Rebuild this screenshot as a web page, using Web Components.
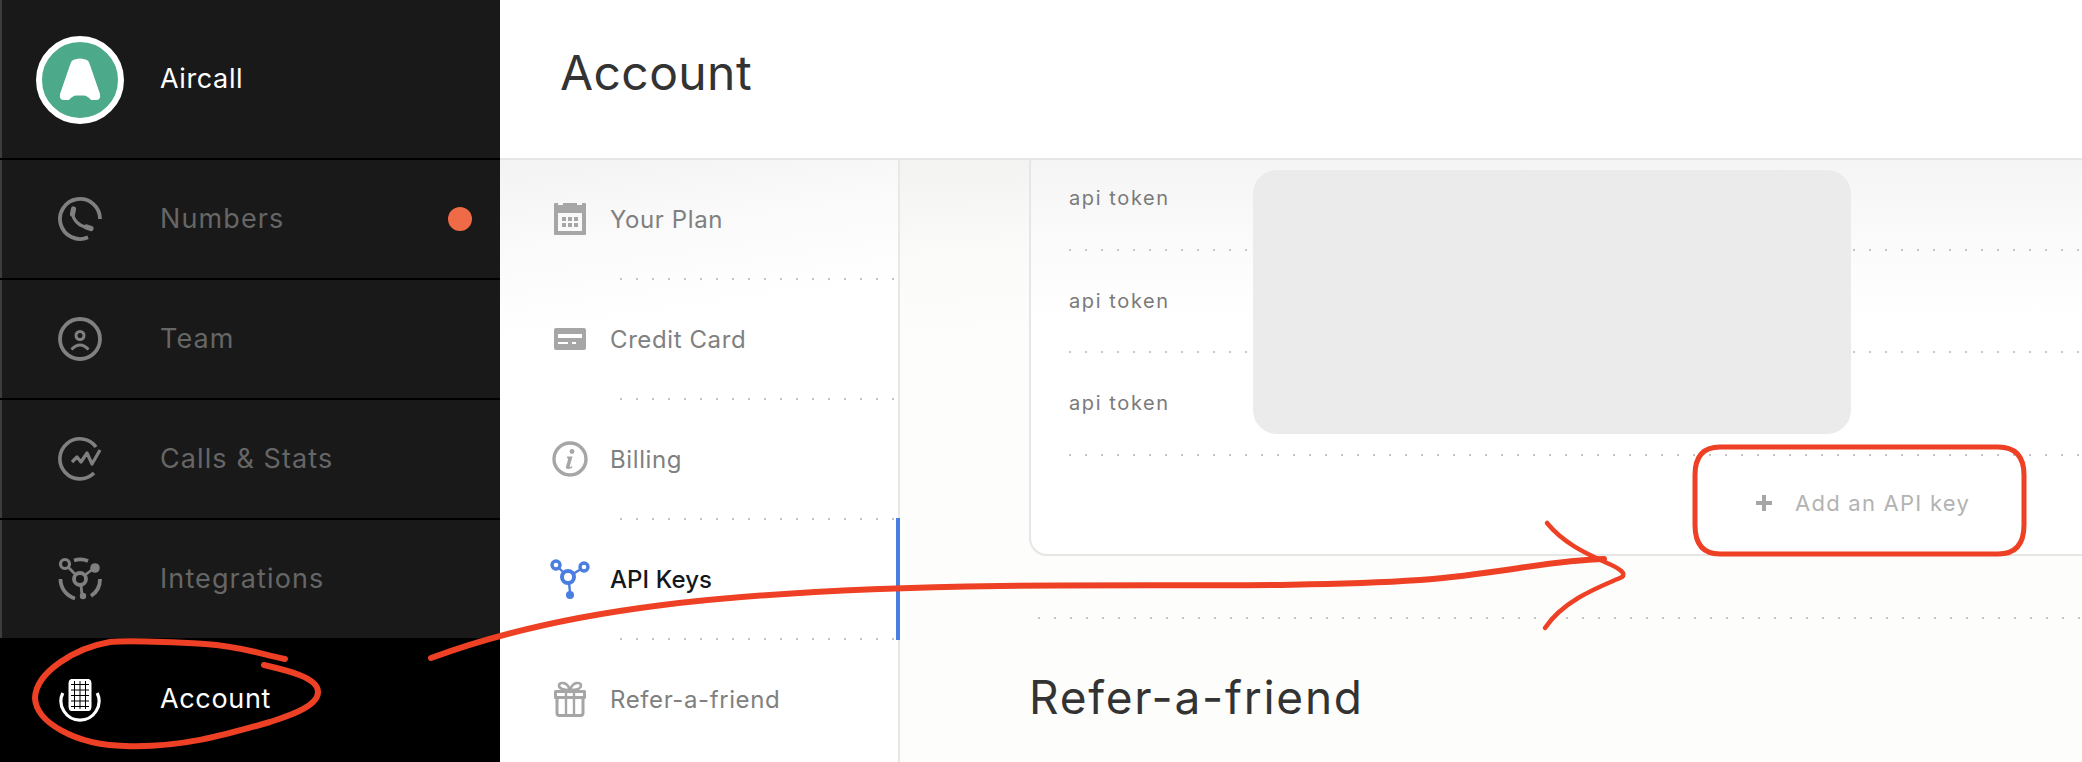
<!DOCTYPE html>
<html>
<head>
<meta charset="utf-8">
<title>Account</title>
<style>
    html, body{
        margin: 0;
        height: 100%;
        overflow: hidden;
        font-family: "Inter", "Liberation Sans", sans-serif;
    }
</style>
</head>
<body>
<app-page>
    <side-bar slot="side">
        <brand-row>Aircall</brand-row>
        <nav-row icon="phone" dot>Numbers</nav-row>
        <nav-row icon="team">Team</nav-row>
        <nav-row icon="stats">Calls &amp; Stats</nav-row>
        <nav-row icon="integrations" last>Integrations</nav-row>
        <nav-row icon="account" active last>Account</nav-row>
    </side-bar>
    <page-header slot="head">Account</page-header>
    <sub-nav slot="nav">
        <sub-item icon="plan">Your Plan</sub-item>
        <sub-item icon="card">Credit Card</sub-item>
        <sub-item icon="info">Billing</sub-item>
        <sub-item icon="keys" active>API Keys</sub-item>
        <sub-item icon="gift" last>Refer-a-friend</sub-item>
    </sub-nav>
    <key-card slot="main">
        <key-row>api token</key-row>
        <key-row>api token</key-row>
        <key-row>api token</key-row>
        <add-key>Add an API key</add-key>
    </key-card>
    <dot-line slot="main" style="margin: 61px 0 0 9px"></dot-line>
    <section-title slot="main">Refer-a-friend</section-title>
</app-page>

<script>
const ICONS = {
    phone: `<svg width="44" height="44" viewBox="0 0 44 44" fill="none" stroke="currentColor" stroke-linecap="round"><path d="M30 40.300A20 20 0 1 1 42 22" stroke-width="3.800" stroke-linecap="butt"/><path d="M15.500 12L14.500 17M28.500 30L33 31.500" stroke-width="5.200"/><path d="M14.500 16C15 23 21 29 29 30.500" stroke-width="3.200"/></svg>`,
    team: `<svg width="44" height="44" viewBox="0 0 44 44" fill="none" stroke="currentColor"><circle cx="22" cy="22" r="20" stroke-width="3.800"/><circle cx="22" cy="18.500" r="4" stroke-width="3"/><path d="M13.500 32.500Q22 23.500 30.500 32.500" stroke-width="3"/></svg>`,
    stats: `<svg width="44" height="44" viewBox="0 0 44 44" fill="none" stroke="currentColor" stroke-width="3.600"><path d="M36 36A20 20 0 1 1 38 10"/><path d="M14 25l5-5 4 5 6-9 5 11 8-14" stroke-linejoin="round" stroke-width="3.200"/></svg>`,
    integrations: `<svg width="44" height="44" viewBox="0 0 44 44" fill="none" stroke="currentColor" stroke-width="3"><circle cx="22" cy="22" r="6" stroke-width="3.800"/><circle cx="7" cy="7" r="4.500" stroke-width="3.200"/><circle cx="37" cy="11" r="4.800" fill="currentColor" stroke="none"/><circle cx="25" cy="39" r="3.200" fill="currentColor" stroke="none"/><path d="M10 10l7 7M27 18l8-6M23 28l1 10" stroke-width="2.800"/><path d="M16 3.500A20 20 0 0 1 30 4M2.500 22A20 20 0 0 0 17 41.500M42 22A20 20 0 0 1 33 39" stroke-width="3.800"/></svg>`,
    account: `<svg width="44" height="44" viewBox="0 0 44 44" fill="none"><path d="M4.800 15A19 19 0 1 0 39.200 15" stroke="currentColor" stroke-width="3.200"/><path d="M13 1h18q2.500 1 2.500 4v24q0 3-2.500 4H13q-2.500-1-2.500-4V5q0-3 2.500-4z" fill="currentColor"/><path d="M16.500 3v28M22 3v28M27.500 3v28M13 6.500h18M13 12h18M13 17.500h18M13 23h18M13 28.500h18" stroke="#000" stroke-width="1"/></svg>`,
    plan: `<svg width="32" height="32" viewBox="0 0 32 32"><path fill-rule="evenodd" fill="currentColor" d="M1 0h3v2h5V0h14v2h5V0h3q1 0 1 1v30q0 1-1 1H1q-1 0-1-1V1q0-1 1-1zM4 10v18h24V10zM8 14h4v4H8zM14 14h4v4h-4zM20 14h4v4h-4zM8 20h4v4H8zM14 20h4v4h-4zM20 20h4v4h-4z"/></svg>`,
    card: `<svg width="32" height="32" viewBox="0 0 32 32"><path fill-rule="evenodd" fill="currentColor" d="M2 5h28q2 0 2 2v18q0 2-2 2H2q-2 0-2-2V7q0-2 2-2zM4 11v4h24v-4zM4 19v2h10v-2zM18 19v2h4v-2z"/></svg>`,
    info: `<svg width="36" height="36" viewBox="0 0 36 36"><circle cx="18" cy="18" r="16" fill="none" stroke="currentColor" stroke-width="3.400"/><circle cx="20" cy="10.500" r="2.400" fill="currentColor"/><path d="M15 15.500h5.500l-2.700 9.500q-.3 1.200 1 .8l1.700-.8-.4 1.700q-2.600 1.300-4.400 1.200-2.300-.2-1.600-2.700l2-7q.2-1-1-1z" fill="currentColor"/></svg>`,
    keys: `<svg width="40" height="40" viewBox="0 0 40 40" fill="none" stroke="currentColor"><circle cx="18" cy="18" r="6" stroke-width="4"/><circle cx="6" cy="6" r="4" stroke-width="3.400"/><circle cx="34" cy="8" r="4" stroke-width="3.400"/><circle cx="20" cy="36" r="4" fill="currentColor" stroke="none"/><path d="M9 9l5 5M23 15l8-5M19 24l1 9" stroke-width="2.400"/></svg>`,
    gift: `<svg width="32" height="36" viewBox="0 0 32 36" fill="none" stroke="currentColor" stroke-width="3"><path d="M3 17v15q0 2.500 2.500 2.500h21q2.500 0 2.500-2.500V17"/><path d="M1.500 10.500h29v6h-29z" stroke-linejoin="round"/><path d="M12 11v24M20 11v24" stroke-width="2.400"/><path d="M16 9C10 9 5 8 5 4.500 5 1 13 0 16 9c3-9 11-8 11-4.500S22 9 16 9z" stroke-width="2.600"/></svg>`
};

class AppPage extends HTMLElement
{
    constructor()
    {
        super();
        this.attachShadow({mode: "open"});
        this.shadowRoot.innerHTML = `
        <style>
            :host{
                display: grid;
                grid-template-columns: 500px 1fr;
                grid-template-rows: 160px 1fr;
                height: 762px;
                overflow: hidden;
                position: relative;
                background: #fff;
            }
            .side{ grid-row: 1 / 3; }
            .body{
                display: flex;
                min-height: 0;
            }
            .main{
                flex: 1;
                min-width: 0;
                padding-left: 129px;
                background: linear-gradient(178deg, #f3f3f2, #fafaf9 90px, #fdfdfb 175px);
                overflow: hidden;
            }
        </style>
        <div class="side"><slot name="side"></slot></div>
        <slot name="head"></slot>
        <div class="body">
            <slot name="nav"></slot>
            <div class="main"><slot name="main"></slot></div>
        </div>
        <scribble-layer></scribble-layer>
        `;
    }
}
customElements.define("app-page", AppPage);

class SideBar extends HTMLElement
{
    constructor()
    {
        super();
        this.attachShadow({mode: "open"});
        this.shadowRoot.innerHTML = `
        <style>
            :host{
                display: flex;
                flex-direction: column;
                height: 762px;
                background: #191919;
                box-shadow: inset 2px 0 0 #3d3d3d;
            }
        </style>
        <slot></slot>
        `;
    }
}
customElements.define("side-bar", SideBar);

class BrandRow extends HTMLElement
{
    constructor()
    {
        super();
        this.attachShadow({mode: "open"});
        this.shadowRoot.innerHTML = `
        <style>
            :host{
                display: flex;
                align-items: center;
                box-sizing: border-box;
                height: 160px;
                padding: 2px 0 0 36px;
                border-bottom: 2px solid #000;
                color: #fff;
                font-size: 27px;
                letter-spacing: .6px;
            }
            svg{ margin-right: 36px; }
            .text{ padding-bottom: 3px; }
        </style>
        <svg width="88" height="88" viewBox="36 36 88 88">
            <circle cx="80" cy="80" r="41" fill="#4caa8b" stroke="#fff" stroke-width="6"/>
            <path d="M73 60Q80 57 87 60Q89 61 90 65L100 94Q101 100 96 100L91 100Q88 96 84 95.500L76 95.500Q72 96 69 100L64 100Q59 100 60 94L70 65Q71 61 73 60Z" fill="#fff"/>
        </svg>
        <span class="text"><slot></slot></span>
        `;
    }
}
customElements.define("brand-row", BrandRow);

class NavRow extends HTMLElement
{
    constructor()
    {
        super();
        this.attachShadow({mode: "open"});
        const dot = this.hasAttribute("dot") ? `<span class="dot"></span>` : "";
        this.shadowRoot.innerHTML = `
        <style>
            :host{
                display: flex;
                align-items: center;
                box-sizing: border-box;
                height: 120px;
                padding-left: 58px;
                border-bottom: 2px solid #000;
                color: #666;
                font-size: 27px;
                letter-spacing: 1.100px;
            }
            :host([last]){
                height: 118px;
                border-bottom: 0;
            }
            :host([active]){
                height: 124px;
                background: #000;
                color: #fff;
                letter-spacing: .65px;
            }
            .icon{
                display: flex;
                color: #808080;
                margin-right: 58px;
            }
            .text{ padding-bottom: 1px; }
            :host([active]) .text{ padding-bottom: 3px; }
            :host([active]) .icon{ color: #fff; }
            .dot{
                width: 24px;
                height: 24px;
                border-radius: 50%;
                background: #ef6a47;
                margin: 0 28px 0 auto;
            }
        </style>
        <span class="icon">${ICONS[this.getAttribute("icon")]}</span>
        <span class="text"><slot></slot></span>
        ${dot}
        `;
    }
}
customElements.define("nav-row", NavRow);

class PageHeader extends HTMLElement
{
    constructor()
    {
        super();
        this.attachShadow({mode: "open"});
        this.shadowRoot.innerHTML = `
        <style>
            :host{
                display: flex;
                align-items: center;
                box-sizing: border-box;
                height: 160px;
                padding: 0 0 14px 60px;
                border-bottom: 2px solid #e6e6e6;
                color: #333;
                font-size: 48px;
                letter-spacing: .4px;
                background: #fff;
            }
        </style>
        <slot></slot>
        `;
    }
}
customElements.define("page-header", PageHeader);

class DotLine extends HTMLElement
{
    constructor()
    {
        super();
        this.attachShadow({mode: "open"});
        this.shadowRoot.innerHTML = `
        <style>
            :host{
                display: block;
                height: 2px;
                background: linear-gradient(90deg, #c4c4c4 2px, transparent 2px) 0 0 / 16px 2px repeat-x;
            }
        </style>
        `;
    }
}
customElements.define("dot-line", DotLine);

class SubNav extends HTMLElement
{
    constructor()
    {
        super();
        this.attachShadow({mode: "open"});
        this.shadowRoot.innerHTML = `
        <style>
            :host{
                display: block;
                box-sizing: border-box;
                flex: 0 0 400px;
                border-right: 2px solid #e8e8e8;
                background: linear-gradient(172deg, #f3f3f3, #fbfbfb 100px, #fff 180px);
            }
        </style>
        <slot></slot>
        `;
    }
}
customElements.define("sub-nav", SubNav);

class SubItem extends HTMLElement
{
    constructor()
    {
        super();
        this.attachShadow({mode: "open"});
        const line = this.hasAttribute("last") ? "" : `<dot-line></dot-line>`;
        this.shadowRoot.innerHTML = `
        <style>
            :host{
                display: block;
                position: relative;
                color: #808080;
                font-size: 24px;
                letter-spacing: .6px;
            }
            :host([active]){
                color: #14171c;
                font-weight: 500;
                letter-spacing: .1px;
            }
            :host([active])::after{
                content: "";
                position: absolute;
                top: -2px;
                right: -2px;
                width: 4px;
                height: 122px;
                background: #4a7ee0;
            }
            .row{
                display: flex;
                align-items: center;
                height: 118px;
                padding-left: 30px;
            }
            .icon{
                display: flex;
                justify-content: center;
                flex: 0 0 80px;
                color: #a6a6a6;
            }
            :host([active]) .icon{ color: #4a7ee0; }
            .text{ padding-top: 1px; }
            dot-line{ margin: 0 4px 0 120px; }
        </style>
        <div class="row">
            <span class="icon">${ICONS[this.getAttribute("icon")]}</span>
            <span class="text"><slot></slot></span>
        </div>
        ${line}
        `;
    }
}
customElements.define("sub-item", SubItem);

class KeyCard extends HTMLElement
{
    constructor()
    {
        super();
        this.attachShadow({mode: "open"});
        this.shadowRoot.innerHTML = `
        <style>
            :host{
                display: block;
                position: relative;
                box-sizing: border-box;
                height: 410px;
                margin-top: -14px;
                padding-left: 38px;
                border: 2px solid #e6e6e6;
                border-right: 0;
                border-radius: 18px 0 0 18px;
                background: linear-gradient(180deg, #f5f5f5 14px, #fbfbfb 100px, #fff 170px);
            }
            .redact{
                position: absolute;
                left: 222px;
                top: 22px;
                width: 598px;
                height: 264px;
                border-radius: 24px;
                background: #ebebeb;
            }
        </style>
        <slot></slot>
        <div class="redact"></div>
        `;
    }
}
customElements.define("key-card", KeyCard);

class KeyRow extends HTMLElement
{
    constructor()
    {
        super();
        this.attachShadow({mode: "open"});
        this.shadowRoot.innerHTML = `
        <style>
            :host{
                display: block;
                color: #7a7a7a;
                font-size: 20px;
                letter-spacing: 1.600px;
            }
            .label{
                display: flex;
                align-items: center;
                height: 100.500px;
            }
        </style>
        <div class="label"><slot></slot></div>
        <dot-line></dot-line>
        `;
    }
}
customElements.define("key-row", KeyRow);

class AddKey extends HTMLElement
{
    constructor()
    {
        super();
        this.attachShadow({mode: "open"});
        this.shadowRoot.innerHTML = `
        <style>
            :host{
                display: flex;
                align-items: center;
                height: 94px;
                padding-left: 687px;
                color: #b3b3b3;
                font-size: 22px;
                letter-spacing: 1.250px;
            }
            svg{ margin-right: 23px; }
        </style>
        <svg width="16" height="16" viewBox="0 0 16 16"><path d="M6 0h4v6h6v4h-6v6H6v-6H0V6h6z" fill="#a6a6a6"/></svg>
        <slot></slot>
        `;
    }
}
customElements.define("add-key", AddKey);

class SectionTitle extends HTMLElement
{
    constructor()
    {
        super();
        this.attachShadow({mode: "open"});
        this.shadowRoot.innerHTML = `
        <style>
            :host{
                display: block;
                margin-top: 48px;
                color: #333;
                font-size: 46px;
                letter-spacing: 1.750px;
                line-height: 60px;
            }
        </style>
        <slot></slot>
        `;
    }
}
customElements.define("section-title", SectionTitle);

class ScribbleLayer extends HTMLElement
{
    constructor()
    {
        super();
        this.attachShadow({mode: "open"});
        this.shadowRoot.innerHTML = `
        <style>
            :host{
                position: absolute;
                left: 0;
                top: 0;
                width: 2082px;
                height: 762px;
                pointer-events: none;
            }
        </style>
        <svg width="2082" height="762" viewBox="0 0 2082 762" fill="none" stroke="#ee4024" stroke-linecap="round" stroke-linejoin="round">
            <path stroke-width="6" d="M285 659C260 654 240 646 205 644C170 642 130 640 110 642C75 648 36 672 35 698C36 722 75 745 125 746C180 748 225 735 270 722C295 714 318 705 318 692C318 678 290 671 264 665"/>
            <path stroke-width="6" d="M431 658C560 610 720 590 1000 586C1150 584 1300 588 1420 580C1500 574 1550 560 1604 559"/>
            <path stroke-width="4.500" d="M1547 523C1565 545 1590 555 1607 563Q1628 572 1622 577C1605 585 1565 598 1545 628"/>
            <path stroke-width="5" d="M1720 447Q1695 447 1695 475V525Q1695 554 1720 554L1998 554Q2024 554 2024 525V475Q2024 447 1998 447Z"/>
        </svg>
        `;
    }
}
customElements.define("scribble-layer", ScribbleLayer);
</script>
</body>
</html>
